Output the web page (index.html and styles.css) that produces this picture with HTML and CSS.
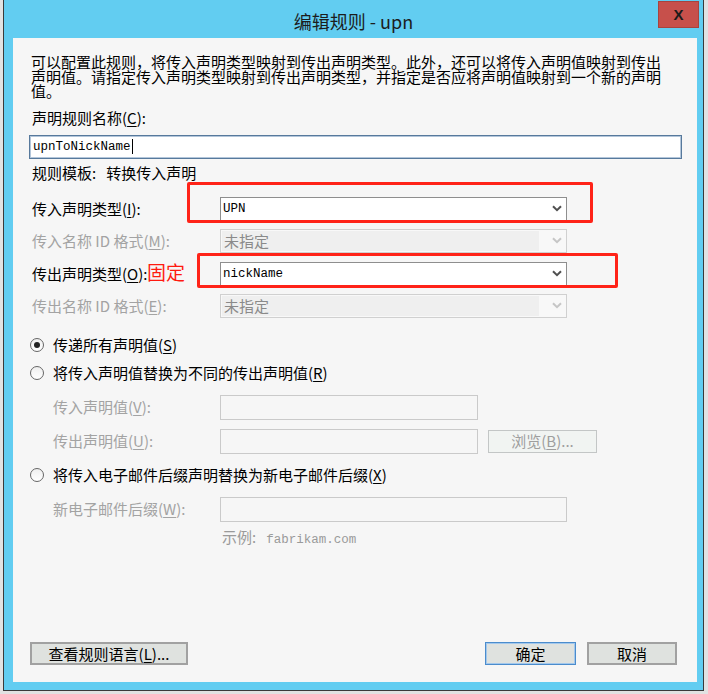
FILE: index.html
```html
<!DOCTYPE html>
<html lang="zh-CN">
<head>
<meta charset="utf-8">
<title>编辑规则 - upn</title>
<link rel="stylesheet" href="styles.css">
</head>
<body>
<div class="window">
  <div class="titlebar">
    <span class="title">编辑规则 - upn</span>
    <button class="close" type="button">X</button>
  </div>
  <div class="panel">
    <p class="desc">可以配置此规则，将传入声明类型映射到传出声明类型。此外，还可以将传入声明值映射到传出声明值。请指定传入声明类型映射到传出声明类型，并指定是否应将声明值映射到一个新的声明值。</p>
    <div class="label name-label">声明规则名称(<u>C</u>):</div>
    <div class="textbox name-box"><span class="mono">upnToNickName</span><span class="caret"></span></div>
    <div class="label template">规则模板:<span class="gap"></span>转换传入声明</div>

    <div class="row r1">
      <span class="label row-label">传入声明类型(<u>I</u>):</span>
      <div class="combo"><span class="value mono">UPN</span><svg class="chev" viewBox="0 0 10 7" width="10" height="7"><path d="M1 1.2 L5 5.2 L9 1.2"/></svg></div>
    </div>
    <div class="row r2 disabled">
      <span class="label row-label">传入名称 ID 格式(<u>M</u>):</span>
      <div class="combo off"><span class="value">未指定</span><svg class="chev" viewBox="0 0 10 7" width="10" height="7"><path d="M1 1.2 L5 5.2 L9 1.2"/></svg></div>
    </div>
    <div class="row r3">
      <span class="label row-label">传出声明类型(<u>O</u>):</span>
      <div class="combo"><span class="value mono">nickName</span><svg class="chev" viewBox="0 0 10 7" width="10" height="7"><path d="M1 1.2 L5 5.2 L9 1.2"/></svg></div>
    </div>
    <div class="row r4 disabled">
      <span class="label row-label">传出名称 ID 格式(<u>E</u>):</span>
      <div class="combo off"><span class="value">未指定</span><svg class="chev" viewBox="0 0 10 7" width="10" height="7"><path d="M1 1.2 L5 5.2 L9 1.2"/></svg></div>
    </div>

    <label class="radio-row rd1"><span class="radio checked"></span><span>传递所有声明值(<u>S</u>)</span></label>
    <label class="radio-row rd2"><span class="radio"></span><span>将传入声明值替换为不同的传出声明值(<u>R</u>)</span></label>

    <div class="sub s1 disabled">
      <span class="label sub-label">传入声明值(<u>V</u>):</span>
      <div class="textbox off short"></div>
    </div>
    <div class="sub s2 disabled">
      <span class="label sub-label">传出声明值(<u>U</u>):</span>
      <div class="textbox off short"></div>
      <button class="browse" type="button">浏览(<u>B</u>)...</button>
    </div>

    <label class="radio-row rd3"><span class="radio"></span><span>将传入电子邮件后缀声明替换为新电子邮件后缀(<u>X</u>)</span></label>

    <div class="sub s3 disabled">
      <span class="label sub-label">新电子邮件后缀(<u>W</u>):</span>
      <div class="textbox off long"></div>
    </div>
    <div class="example">示例:<span class="gap"></span><span class="mono">fabrikam.com</span></div>

    <div class="buttons">
      <button class="btn view" type="button">查看规则语言(<u>L</u>)...</button>
      <span class="spacer"></span>
      <button class="btn ok" type="button">确定</button>
      <button class="btn cancel" type="button">取消</button>
    </div>

    <div class="annot box1"></div>
    <div class="annot box2"></div>
    <div class="annot fixed">固定</div>
  </div>
</div>
</body>
</html>
```
FILE: styles.css
```css
* { box-sizing: border-box; }
html, body { margin: 0; padding: 0; }
body {
  width: 708px;
  height: 694px;
  overflow: hidden;
  background: #e2e2e2;
  font-family: "Noto Sans CJK SC", "Noto Sans", sans-serif;
  font-size: 15px;
  color: #000;
}
u { text-decoration: underline; text-underline-offset: 2px; }
.mono { font-family: "Liberation Mono", "Noto Sans CJK SC", monospace; font-size: 12.5px; }
.gap { display: inline-block; width: 10px; }

.window {
  margin-left: 3px;
  width: 701px;
  height: 691px;
  background: #62cdf1;
  border: 1px solid #3a3a3a;
  border-top: 0;
  display: flex;
  flex-direction: column;
  padding: 0 6px 8px 9px;
}

.titlebar {
  height: 38px;
  flex: none;
  display: grid;
  grid-template-columns: 1fr auto;
  position: relative;
  margin-left: -9px;
  margin-right: -6px;
}
.title {
  grid-column: 1 / 3;
  grid-row: 1;
  justify-self: center;
  align-self: center;
  font-size: 18px;
  line-height: 24px;
  color: #1c1c1c;
  margin-top: 3px;
}
.close {
  grid-column: 2;
  grid-row: 1;
  align-self: start;
  justify-self: end;
  width: 41px;
  height: 27px;
  margin: 1px 4px 0 0;
  padding: 0;
  border: 1px solid #a8433e;
  background: #c7504b;
  color: #1a1a1a;
  font-family: "Liberation Sans", sans-serif;
  font-weight: bold;
  font-size: 15px;
  line-height: 25px;
}

.panel {
  flex: 1;
  background: #f6f6f6;
  position: relative;
  display: flex;
  flex-direction: column;
  padding-bottom: 17px;
}

.desc {
  margin: 17px 0 0 18px;
  width: 632px;
  line-height: 14.5px;
}
.label { line-height: 20px; white-space: nowrap; }
.name-label { margin: 9.5px 0 0 19px; }
.textbox {
  height: 24px;
  background: #fff;
  border: 1px solid #aaa;
  display: flex;
  align-items: center;
}
.name-box {
  margin: 6.5px 0 0 16px;
  width: 653px;
  border: 1px solid #57799c;
  box-shadow: inset 0 0 0 1px #b3c6da;
  padding-left: 3px;
}
.caret { width: 1px; height: 15px; background: #000; margin-left: 1px; }
.template { margin: 4px 0 0 19px; }

.row {
  display: flex;
  align-items: center;
  height: 24px;
  margin-left: 19px;
}
.r1 { margin-top: 14px; }
.r2 { margin-top: 8px; }
.r3 { margin-top: 9px; }
.r4 { margin-top: 8px; }
.row-label { width: 188px; }
.disabled .label { color: #a3a3a3; }

.combo {
  width: 347px;
  height: 24px;
  background: #fff;
  border: 1px solid #8e8e8e;
  display: flex;
  align-items: center;
  padding-right: 4px;
}
.combo .value { flex: 1; padding-left: 2px; }
.chev { flex: none; }
.chev path { fill: none; stroke: #505050; stroke-width: 2; }
.combo.off { background: #f8f8f8; border-color: #d0d0d0; padding: 1px 4px 1px 1px; }
.combo.off .value {
  align-self: stretch;
  background: #efefef;
  color: #8a8a8a;
  display: flex;
  align-items: center;
  margin-right: 13px;
  line-height: 20px;
}
.combo.off .chev path { stroke: #c6c6c6; }

.radio-row {
  display: flex;
  align-items: center;
  height: 20px;
  margin-left: 17px;
  gap: 9px;
  line-height: 20px;
}
.rd1 { margin-top: 17px; }
.rd2 { margin-top: 8px; }
.rd3 { margin-top: 11px; }
.radio {
  width: 14px;
  height: 14px;
  border-radius: 50%;
  border: 1px solid #666;
  background: linear-gradient(#efefef, #ffffff);
  display: flex;
  align-items: center;
  justify-content: center;
  flex: none;
}
.radio.checked::after {
  content: "";
  width: 6px;
  height: 6px;
  border-radius: 50%;
  background: #222;
}

.sub {
  display: flex;
  align-items: center;
  height: 25px;
  margin-left: 40px;
}
.s1 { margin-top: 12px; }
.s2 { margin-top: 9px; }
.s3 { margin-top: 12px; }
.sub-label { width: 167px; }
.textbox.off { height: 25px; background: #f6f6f6; border-color: #cacaca; }
.short { width: 258px; }
.long { width: 347px; }
.browse {
  margin-left: 10px;
  width: 109px;
  height: 23px;
  padding: 0;
  background: #f1f4f2;
  border: 1px solid #c3c6c6;
  color: #9e9e9e;
  font-family: inherit;
  font-size: 15px;
  line-height: 20px;
}

.example {
  margin: 7px 0 0 209px;
  line-height: 16px;
  color: #9a9a9a;
}

.buttons {
  margin-top: auto;
  display: flex;
  align-items: center;
  margin-left: 17px;
  padding-right: 20px;
  gap: 11px;
}
.spacer { flex: 1; }
.btn {
  height: 23px;
  padding: 0;
  background: #dfe2df;
  border: 2px solid #a1a1a1;
  font-family: inherit;
  font-size: 15px;
  line-height: 18px;
  color: #000;
}
.view { width: 158px; }
.ok { width: 91px; border: 1px solid #4b8ccc; box-shadow: inset 0 0 0 1px #a3c8ec; }
.cancel { width: 90px; }

.annot { position: absolute; }
.box1, .box2 { border: 3px solid #ff2318; border-radius: 2px; }
.box1 { left: 174px; top: 144px; width: 406px; height: 41px; }
.box2 { left: 184px; top: 215px; width: 421px; height: 35px; }
.fixed {
  left: 134px;
  top: 222px;
  font-size: 19px;
  line-height: 24px;
  color: #ff1a10;
}
```
